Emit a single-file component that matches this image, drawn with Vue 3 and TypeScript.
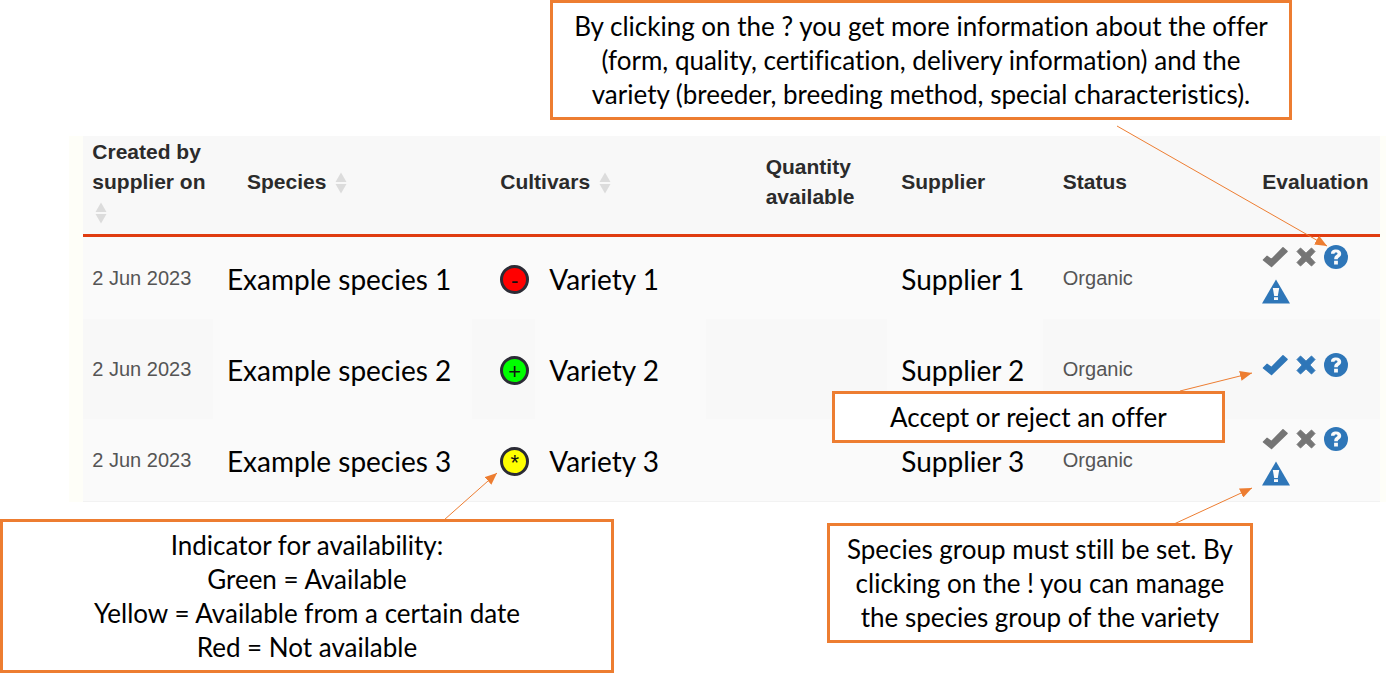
<script setup lang="ts">
type Availability = 'red' | 'green' | 'yellow'

interface Offer {
  id: number
  created: string
  species: string
  cultivar: string
  availability: Availability
  supplier: string
  status: string
  decidable: boolean
}

interface Arrow {
  x1: number
  y1: number
  x2: number
  y2: number
}

const offers: Offer[] = [
  { id: 1, created: '2 Jun 2023', species: 'Example species 1', cultivar: 'Variety 1', availability: 'red', supplier: 'Supplier 1', status: 'Organic', decidable: false },
  { id: 2, created: '2 Jun 2023', species: 'Example species 2', cultivar: 'Variety 2', availability: 'green', supplier: 'Supplier 2', status: 'Organic', decidable: true },
  { id: 3, created: '2 Jun 2023', species: 'Example species 3', cultivar: 'Variety 3', availability: 'yellow', supplier: 'Supplier 3', status: 'Organic', decidable: false },
]

const symbols: Record<Availability, string> = { red: '-', green: '+', yellow: '*' }

const columns = [
  { key: 'created', label: 'Created by supplier on', sortable: true },
  { key: 'species', label: 'Species', sortable: true },
  { key: 'cultivar', label: 'Cultivars', sortable: true },
  { key: 'quantity', label: 'Quantity available', sortable: false },
  { key: 'supplier', label: 'Supplier', sortable: false },
  { key: 'status', label: 'Status', sortable: false },
  { key: 'evaluation', label: 'Evaluation', sortable: false },
]

const arrows: Arrow[] = [
  { x1: 1117, y1: 126, x2: 1327, y2: 246 },
  { x1: 1180, y1: 391, x2: 1252, y2: 373 },
  { x1: 1174, y1: 524, x2: 1252, y2: 488 },
  { x1: 444, y1: 520, x2: 497, y2: 473 },
]
</script>

<template>
  <main class="guide">
    <aside class="callout callout-info">
      <span>By clicking on the ? you get more information about the offer</span>
      <span>(form, quality, certification, delivery information) and the</span>
      <span>variety (breeder, breeding method, special characteristics).</span>
    </aside>

    <div class="sheet">
      <table>
        <thead>
          <tr>
            <th v-for="c in columns" :key="c.key" scope="col" :class="c.key">
              {{ c.label }}
              <button v-if="c.sortable" type="button" class="sort" :aria-label="`Sort by ${c.label}`">
                <svg width="12" height="22" viewBox="0 0 12 22"><path d="M6 0.500L11.500 10H0.500ZM0.500 12H11.500L6 21.500Z" /></svg>
              </button>
            </th>
          </tr>
        </thead>
        <tbody>
          <tr v-for="o in offers" :key="o.id" :class="{ open: o.decidable }">
            <td class="created">{{ o.created }}</td>
            <td class="species large">{{ o.species }}</td>
            <td class="cultivar large">
              <div class="variety">
                <span class="dot" :class="o.availability">{{ symbols[o.availability] }}</span>
                <span>{{ o.cultivar }}</span>
              </div>
            </td>
            <td class="quantity"></td>
            <td class="supplier large">{{ o.supplier }}</td>
            <td class="status">{{ o.status }}</td>
            <td class="evaluation">
              <div class="actions">
                <button type="button" aria-label="Accept offer" :disabled="!o.decidable">
                  <svg width="26" height="22" viewBox="0 0 26 22"><path d="M1.500 14L5 10.400L9.500 13.600L21 1.800L25 5.400L9.500 20.500Z" stroke="currentColor" stroke-width="1.500" stroke-linejoin="round" /></svg>
                </button>
                <button type="button" aria-label="Reject offer" :disabled="!o.decidable">
                  <svg width="20" height="20" viewBox="0 0 20 20"><path d="M4.500 1L10 6.200L15.500 1L19 4.500L13.800 10L19 15.500L15.500 19L10 13.800L4.500 19L1 15.500L6.200 10L1 4.500Z" stroke="currentColor" stroke-width="1" stroke-linejoin="round" /></svg>
                </button>
                <button type="button" aria-label="Offer information">
                  <svg width="24" height="24" viewBox="0 0 24 24">
                    <circle cx="12" cy="12" r="12" />
                    <path class="cut" d="M7 8.800C7 5.600 9 4.500 12 4.500C15.200 4.500 17.200 6.200 17.200 8.700C17.200 10.700 16.200 11.600 14.900 12.400C14 13 13.800 13.300 13.800 14.200H10.200C10.200 12 10.900 11 12.300 10.100C13.200 9.500 13.500 9.200 13.500 8.600C13.500 7.900 13 7.500 12.100 7.500C11 7.500 10.600 8 10.500 8.800ZM10.100 15.800H13.900V19.400H10.100Z" />
                  </svg>
                </button>
              </div>
              <div v-if="!o.decidable" class="actions">
                <button type="button" aria-label="Manage species group">
                  <svg width="28" height="25" viewBox="0 0 28 25">
                    <path d="M14 0.500L28 24.500H0Z" />
                    <path class="cut" d="M10.800 9H17.200L15.800 17H12.200ZM12 18.300H16V21H12Z" />
                  </svg>
                </button>
              </div>
            </td>
          </tr>
        </tbody>
      </table>
    </div>

    <div class="notes">
      <aside class="callout callout-availability">
        <span>Indicator for availability:</span>
        <span>Green = Available</span>
        <span>Yellow = Available from a certain date</span>
        <span>Red = Not available</span>
      </aside>
      <aside class="callout callout-group">
        <span>Species group must still be set. By</span>
        <span>clicking on the ! you can manage</span>
        <span>the species group of the variety</span>
      </aside>
    </div>

    <aside class="callout callout-accept">
      <span>Accept or reject an offer</span>
    </aside>

    <svg class="arrows" viewBox="0 0 1386 681" preserveAspectRatio="none" aria-hidden="true">
      <defs>
        <marker id="head" markerUnits="userSpaceOnUse" markerWidth="12" markerHeight="10" refX="12" refY="5" orient="auto">
          <path d="M0 0L12 5L0 10Z" />
        </marker>
      </defs>
      <line v-for="(a, i) in arrows" :key="i" :x1="a.x1" :y1="a.y1" :x2="a.x2" :y2="a.y2" marker-end="url(#head)" />
    </svg>
  </main>
</template>

<style>
body {
  margin: 0;
  background: #fff;
}
</style>

<style scoped>
.guide {
  position: relative;
  min-height: 681px;
  box-sizing: border-box;
  font-family: 'Liberation Sans', Arial, sans-serif;
  font-size: 20px;
  font-variant-ligatures: none;
  color: #555;
}

.callout {
  box-sizing: border-box;
  padding: 6px 0;
  border: 3px solid #ed7d31;
  background: #fff;
  color: #000;
  font-family: Lato, Calibri, sans-serif;
  font-size: 26px;
  line-height: 34px;
  text-align: center;
  white-space: nowrap;
}

.callout span {
  display: block;
}

.callout-info {
  width: 53.500%;
  margin-left: 39.700%;
}

.sheet {
  margin: 16px 0 0 5%;
  padding: 0 6px 0 14px;
  background: #fefef8;
}

table {
  width: 100%;
  table-layout: fixed;
  border-collapse: separate;
  border-spacing: 0;
  border-bottom: 1px solid #f2f2f2;
  background: #fafafa;
}

th,
td {
  box-sizing: border-box;
  padding: 0;
  text-align: left;
  vertical-align: middle;
}

th {
  height: 101px;
  padding-bottom: 6px;
  border-bottom: 3px solid #e03c10;
  background: #f8f8f8;
  color: #2b2b2b;
  font-size: 21px;
  line-height: 30px;
}

td {
  height: 82px;
}

.open td {
  height: 100px;
}

th.created { width: 10%; }
th.species { width: 20%; }
th.cultivar { width: 18%; }
th.quantity { width: 14%; }
th.supplier { width: 12%; }
th.status { width: 15%; }
th.evaluation { width: 11%; }

.created { padding-left: 9px; }
td.species { padding-left: 14px; }
th.species { padding-left: 34px; }
.cultivar { padding-left: 28px; }
.quantity { padding-left: 60px; }
.supplier { padding-left: 14px; }
.status { padding-left: 20px; }
.evaluation { padding-left: 25px; }

td.evaluation {
  padding-bottom: 8px;
}

.open .created,
.open .quantity,
.open .status,
.open .evaluation {
  background: #f8f8f8;
}

.open .cultivar {
  background: linear-gradient(to right, #f8f8f8 27%, transparent 27%);
}

.large {
  padding-top: 2px;
  color: #000;
  font-family: Lato, Calibri, sans-serif;
  font-size: 28px;
  line-height: 34px;
  white-space: nowrap;
}

.variety {
  display: flex;
  align-items: center;
  gap: 20px;
}

.dot {
  box-sizing: border-box;
  width: 29px;
  height: 29px;
  border: 3px solid #2b2b35;
  border-radius: 50%;
  color: #111;
  font-family: 'Liberation Sans', Arial, sans-serif;
  font-size: 22px;
  line-height: 26px;
  text-align: center;
}

.red { background: #f00; }
.green { background: #0f0; }
.yellow { background: #ff0; }

button {
  display: inline-flex;
  padding: 0;
  border: 0;
  background: none;
  color: #2e76b8;
  cursor: pointer;
}

button:disabled {
  color: #757575;
  cursor: default;
}

svg {
  fill: currentColor;
}

.sort {
  margin-left: 3px;
  color: #dcdcdc;
  vertical-align: middle;
}

.actions {
  display: flex;
  align-items: center;
  gap: 8px;
  height: 34px;
}

.cut {
  fill: #fafafa;
}

.notes {
  display: flex;
  align-items: flex-start;
  justify-content: space-between;
  margin-top: 17px;
  padding-right: 9.600%;
}

.callout-availability {
  width: 49%;
}

.callout-group {
  width: 34%;
  margin-top: 4px;
}

.callout-accept {
  position: absolute;
  top: 391px;
  left: 60%;
  width: 28.400%;
}

.arrows {
  position: absolute;
  top: 0;
  left: 0;
  width: 100%;
  height: 681px;
  fill: #ed7d31;
  stroke: #ed7d31;
  stroke-width: 1;
  pointer-events: none;
}

.arrows marker path {
  stroke: none;
}
</style>
